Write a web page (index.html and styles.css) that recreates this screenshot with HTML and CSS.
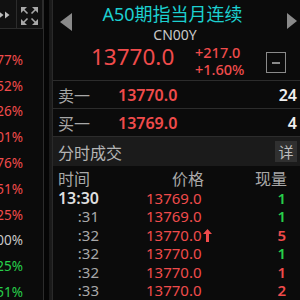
FILE: index.html
```html
<!DOCTYPE html>
<html lang="zh-CN">
<head>
    <meta charset="UTF-8">
    <title>A50期指当月连续</title>
    <link rel="stylesheet" href="styles.css">
</head>
<body>
<div class="screen">

    <!-- left: price ladder, scrolled so only the tail of each value shows -->
    <aside class="ladder">
        <div class="tools">
            <button class="tool tool-more">
                <svg width="16" height="28" viewBox="0 0 16 28">
                    <polygon points="-1,11.5 3.5,15 -1,18.5" fill="#bdbdbd"/>
                    <polygon points="5,11.5 9.5,15 5,18.5" fill="#bdbdbd"/>
                </svg>
            </button>
            <button class="tool tool-full">
                <svg width="25" height="28" viewBox="0 0 25 28">
                    <g fill="#a8a8a8" stroke="#a8a8a8" stroke-width="1.6">
                        <polygon points="4,7 10,7 4,13" stroke="none"/>
                        <line x1="6" y1="9" x2="10.5" y2="13.5"/>
                        <polygon points="21,7 15,7 21,13" stroke="none"/>
                        <line x1="19" y1="9" x2="14.5" y2="13.5"/>
                        <polygon points="4,25 10,25 4,19" stroke="none"/>
                        <line x1="6" y1="23" x2="10.5" y2="18.5"/>
                        <polygon points="21,25 15,25 21,19" stroke="none"/>
                        <line x1="19" y1="23" x2="14.5" y2="18.5"/>
                    </g>
                </svg>
            </button>
        </div>
        <ul class="pct-list">
            <li class="up">+1.77%</li>
            <li class="up">+1.52%</li>
            <li class="up">+1.26%</li>
            <li class="up">+1.01%</li>
            <li class="up">+0.76%</li>
            <li class="up">+0.51%</li>
            <li class="up">+0.25%</li>
            <li class="flat">0.00%</li>
            <li class="down">-0.25%</li>
            <li class="down">-0.51%</li>
        </ul>
    </aside>

    <div class="splitter"></div>

    <!-- right: quote panel -->
    <main class="quote">
        <header class="quote-head">
            <div class="title-row">
                <span class="nav-prev"></span>
                <h1 class="title">A50期指当月连续</h1>
                <span class="nav-next"></span>
            </div>
            <div class="code">CN00Y</div>
            <div class="price-row">
                <div class="last up">13770.0</div>
                <div class="change up">
                    <span>+217.0</span>
                    <span>+1.60%</span>
                </div>
                <button class="collapse"></button>
            </div>
        </header>

        <div class="book-row">
            <span class="book-label">卖一</span>
            <span class="book-price up">13770.0</span>
            <span class="book-vol">24</span>
        </div>
        <div class="book-row">
            <span class="book-label">买一</span>
            <span class="book-price up">13769.0</span>
            <span class="book-vol">4</span>
        </div>

        <div class="section-bar">
            <span>分时成交</span>
            <button class="detail">详</button>
        </div>

        <div class="tick-head">
            <span class="th-time">时间</span>
            <span class="th-price">价格</span>
            <span class="th-vol">现量</span>
        </div>

        <div class="tick-list">
            <div class="tick">
                <span class="t-time main">13:30</span>
                <span class="t-price up">13769.0</span>
                <span class="t-vol down">1</span>
            </div>
            <div class="tick">
                <span class="t-time">:31</span>
                <span class="t-price up">13769.0</span>
                <span class="t-vol down">1</span>
            </div>
            <div class="tick">
                <span class="t-time">:32</span>
                <span class="t-price up">13770.0<svg class="arrow" width="9" height="13" viewBox="0 0 9 13"><polygon points="4.5,0 9,5 6,5 6,13 3,13 3,5 0,5" fill="#f04b4b"/></svg></span>
                <span class="t-vol up">5</span>
            </div>
            <div class="tick">
                <span class="t-time">:32</span>
                <span class="t-price up">13770.0</span>
                <span class="t-vol down">1</span>
            </div>
            <div class="tick">
                <span class="t-time">:32</span>
                <span class="t-price up">13770.0</span>
                <span class="t-vol up">1</span>
            </div>
            <div class="tick">
                <span class="t-time">:33</span>
                <span class="t-price up">13770.0</span>
                <span class="t-vol up">2</span>
            </div>
        </div>
    </main>
</div>
</body>
</html>
```

FILE: styles.css
```css
* {
    box-sizing: border-box;
}

html, body {
    margin: 0;
    background: #000;
}

body {
    width: 300px;
    height: 300px;
    overflow: hidden;
    font-family: "Noto Sans", "Noto Sans CJK SC", sans-serif;
    color: #bbb;
}

.screen {
    display: flex;
    height: 300px;
}

.up { color: #f04b4b; }
.down { color: #27cf4a; }
.flat { color: #c8c8c8; }

/* ---- left ladder ---- */
.ladder {
    width: 44px;
    flex: none;
    background: #0b0b0b;
    border-right: 1px solid #2c2c2c;
    overflow: hidden;
}

.tools {
    display: flex;
    height: 29px;
    border-bottom: 1px solid #2c2c2c;
    background: #111;
}

.tool {
    height: 28px;
    padding: 0;
    margin: 0;
    border: none;
    background: none;
    display: flex;
}

.tool-more {
    width: 17px;
    border-right: 1px solid #2c2c2c;
}

.tool-full {
    width: 26px;
    border-right: 1px solid #2c2c2c;
}

.pct-list {
    list-style: none;
    margin: 0;
    padding: 18px 0 0;
}

.pct-list li {
    height: 25.8px;
    display: flex;
    justify-content: flex-end;
    align-items: center;
    padding-right: 20px;
    font-size: 13.5px;
    white-space: nowrap;
}

.splitter {
    width: 9px;
    flex: none;
    background: linear-gradient(to right, #050505 0, #050505 5px, #181818 5px, #1c1c1c 8px, #2a2a2a 8px);
}

/* ---- right quote panel ---- */
.quote {
    flex: 1;
    min-width: 0;
    background: #0b0b0b;
    display: flex;
    flex-direction: column;
}

.quote-head {
    height: 84px;
    border-bottom: 1px solid #2c2c2c;
}

.title-row {
    display: flex;
    align-items: flex-start;
    height: 25px;
}

.nav-prev {
    margin: 13px 0 0 7px;
    width: 0;
    height: 0;
    border-right: 12px solid #8a8a8a;
    border-top: 9.5px solid transparent;
    border-bottom: 9.5px solid transparent;
}

.nav-next {
    margin: 13px 3px 0 0;
    width: 0;
    height: 0;
    border-left: 10px solid #8a8a8a;
    border-top: 8.5px solid transparent;
    border-bottom: 8.5px solid transparent;
}

.title {
    flex: 1;
    margin: 0 14px 0 0;
    padding-top: 3px;
    font-size: 18px;
    line-height: 22px;
    font-weight: normal;
    text-align: center;
    color: #1cd0d0;
}

.code {
    padding-top: 1px;
    height: 19px;
    font-size: 14px;
    line-height: 18px;
    text-align: center;
    color: #c8c8c8;
    padding-right: 3px;
}

.price-row {
    display: flex;
    align-items: flex-start;
    padding-left: 38px;
}

.last {
    width: 104px;
    margin-top: -2px;
    font-size: 22.5px;
    line-height: 30px;
}

.change {
    display: flex;
    flex-direction: column;
    font-size: 14.5px;
    line-height: 16.5px;
    font-weight: 500;
    white-space: nowrap;
}

.collapse {
    margin: 8px 14px 0 auto;
    width: 20px;
    height: 21px;
    padding: 0;
    border: 1px solid #8a8a8a;
    background: none;
    position: relative;
}

.collapse::after {
    content: "";
    position: absolute;
    left: 5px;
    top: 9px;
    width: 8px;
    height: 2px;
    background: #8a8a8a;
}

.book-row {
    display: flex;
    align-items: center;
    height: 29px;
    border-bottom: 1px solid #2c2c2c;
    font-size: 16px;
}

.book-label {
    width: 65px;
    padding-left: 5px;
    color: #a8a8a8;
}

.book-price {
    flex: 1;
    font-weight: 600;
}

.book-vol {
    padding-right: 3px;
    color: #eee;
    font-weight: 600;
}

.section-bar {
    display: flex;
    align-items: center;
    height: 30px;
    padding-left: 5px;
    background: #1b1b1b;
    font-size: 16px;
    color: #b4b4b4;
}

.detail {
    margin: 0 3px 0 auto;
    width: 22px;
    height: 21px;
    padding: 0;
    border: none;
    background: #303030;
    color: #bdbdbd;
    font-family: "Noto Sans CJK SC", sans-serif;
    font-size: 15px;
    line-height: 21px;
}

.tick-head,
.tick {
    display: grid;
    grid-template-columns: 46px 1fr 60px;
    align-items: center;
}

.tick-head {
    height: 23px;
    font-size: 16px;
    color: #a8a8a8;
}

.th-time { padding-left: 5px; }
.th-price { padding-left: 73px; }
.th-vol { text-align: right; padding-right: 13px; }

.tick {
    height: 18.5px;
    font-size: 15px;
    line-height: 18.5px;
}

.t-time {
    text-align: right;
    color: #a8a8a8;
}

.t-time.main {
    color: #dedede;
    font-weight: 600;
    font-size: 16px;
}

.t-price {
    padding-left: 47px;
    white-space: nowrap;
}

.arrow {
    margin-left: 1px;
    vertical-align: -1px;
}

.t-vol {
    text-align: right;
    padding-right: 14px;
    font-weight: 600;
}
```
